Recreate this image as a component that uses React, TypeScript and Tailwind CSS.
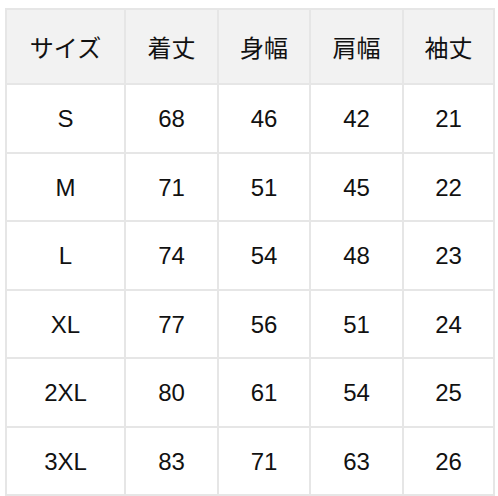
const headers = ['サイズ', '着丈', '身幅', '肩幅', '袖丈'];

const rows = [
  ['S', '68', '46', '42', '21'],
  ['M', '71', '51', '45', '22'],
  ['L', '74', '54', '48', '23'],
  ['XL', '77', '56', '51', '24'],
  ['2XL', '80', '61', '54', '25'],
  ['3XL', '83', '71', '63', '26'],
];

export default function App() {
  return (
    <div className="w-[498px] h-[496px] bg-white pt-[8px] pl-[5px]">
      <div
        className="grid w-[490px] grid-cols-[117px_91px_90px_91px_89px] grid-rows-[73px_repeat(6,66.5px)] gap-[2px] bg-[#e6e6e6] p-[2px] text-[24px] text-[#111]"
        style={{ fontFamily: '"Liberation Sans", "Noto Sans CJK JP", sans-serif' }}
      >
        {headers.map((h) => (
          <div key={h} className="flex items-center justify-center bg-[#f2f2f2] pt-[4px]">
            {h}
          </div>
        ))}
        {rows.map((row) =>
          row.map((cell, i) => (
            <div key={row[0] + i} className="flex items-center justify-center bg-white pt-[2px]">
              {cell}
            </div>
          ))
        )}
      </div>
    </div>
  );
}
